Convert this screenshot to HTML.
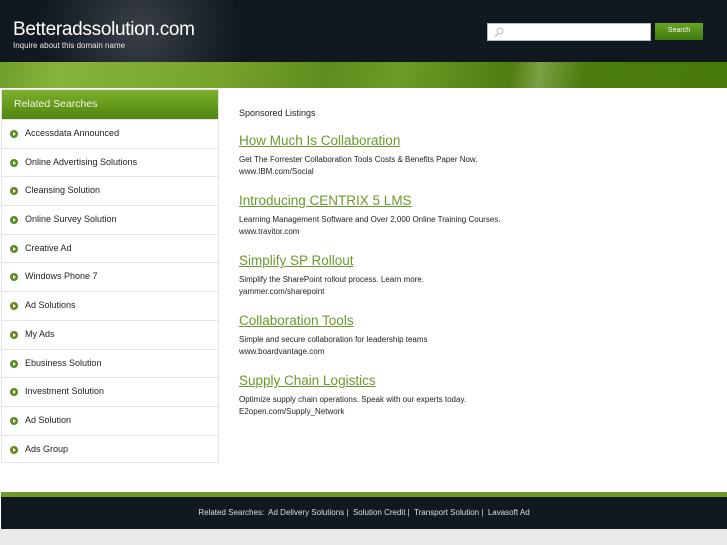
<!DOCTYPE html>
<html><head><style>
*{margin:0;padding:0;box-sizing:border-box}
body{width:727px;height:545px;background:#fff;font-family:"Liberation Sans",sans-serif;position:relative;overflow:hidden}
.hd{position:absolute;left:0;top:0;width:727px;height:62px;background:radial-gradient(circle at 140px 30px,#3a4046 0,#252b32 50px,#121820 100px)}
.hd h1{position:absolute;left:13px;top:19px;font-size:19px;font-weight:normal;color:#fff;letter-spacing:-0.3px}
.hd .sub{position:absolute;left:13px;top:41px;font-size:8px;color:#e8e8e8}
.sb{position:absolute;left:487px;top:23px;width:164px;height:18px;background:#fff;border:1px solid #bbb}
.btn{position:absolute;left:655px;top:23px;width:48px;height:17px;background:linear-gradient(#6aa324,#3f7a10);color:#fff;font-size:7px;text-align:center;line-height:16px}
.band{position:absolute;left:0;top:62px;width:727px;height:26px;background:linear-gradient(100deg,#6f9d2a 0,#86b43a 8%,#77a42c 30%,#5f8d1e 45%,#6b9b28 55%,#4f7d10 70%,#7aa043 74%,#4c7c0e 80%,#497a0c 100%)}
.side{position:absolute;left:1px;top:89px;width:218px;height:374px;border:1px solid #e4e4e4}
.sh{height:29px;background:linear-gradient(#7fb02c,#4f850f);color:#f0f5e8;font-size:10.5px;padding:8px 0 0 12px}
.it{height:28.7px;border-top:1px solid #e4e4e4;font-size:9px;color:#222;padding:8px 0 0 23px;position:relative}
.it:before{content:"";position:absolute;left:8px;top:10px;width:8px;height:8px;border-radius:50%;background:#5c8a1e}
.it:after{content:"";position:absolute;left:11px;top:12px;border-left:3px solid #fff;border-top:2px solid transparent;border-bottom:2px solid transparent}
.main{position:absolute;left:239px;top:107px}
.sp{font-size:9px;color:#222;margin-top:1px}
.ad{position:absolute;left:0;width:400px}
.ad a{font-size:13.5px;color:#6a9a2a;text-decoration:underline;display:block}
.ad p{font-size:8px;color:#222;line-height:12px;margin-top:6px}
.fl{position:absolute;left:1px;top:492px;width:726px;height:5px;background:#6e9a2c}
.fd{position:absolute;left:1px;top:497px;width:726px;height:32px;background:#121820;color:#ddd;font-size:8px;text-align:center;line-height:31px}
.fg{position:absolute;left:0;top:529px;width:727px;height:16px;background:#e9e9e9}
</style></head><body>
<div class="hd"><h1>Betteradssolution.com</h1><div class="sub">Inquire about this domain name</div>
<div class="sb"><svg width="12" height="14" style="position:absolute;left:5px;top:2px"><circle cx="7" cy="5" r="3" fill="none" stroke="#bbb" stroke-width="1"/><line x1="5" y1="7.5" x2="2" y2="11" stroke="#bbb"/></svg></div>
<div class="btn">Search</div></div>
<div class="band"></div>
<div class="side"><div class="sh">Related Searches</div>
<div class="it">Accessdata Announced</div><div class="it">Online Advertising Solutions</div><div class="it">Cleansing Solution</div><div class="it">Online Survey Solution</div><div class="it">Creative Ad</div><div class="it">Windows Phone 7</div><div class="it">Ad Solutions</div><div class="it">My Ads</div><div class="it">Ebusiness Solution</div><div class="it">Investment Solution</div><div class="it">Ad Solution</div><div class="it">Ads Group</div></div>
<div class="main"><div class="sp">Sponsored Listings</div>
<div class="ad" style="top:26px"><a>How Much Is Collaboration</a><p>Get The Forrester Collaboration Tools Costs &amp; Benefits Paper Now.<br>www.IBM.com/Social</p></div>
<div class="ad" style="top:86px"><a>Introducing CENTRIX 5 LMS</a><p>Learning Management Software and Over 2,000 Online Training Courses.<br>www.travitor.com</p></div>
<div class="ad" style="top:146px"><a>Simplify SP Rollout</a><p>Simplify the SharePoint rollout process. Learn more.<br>yammer.com/sharepoint</p></div>
<div class="ad" style="top:206px"><a>Collaboration Tools</a><p>Simple and secure collaboration for leadership teams<br>www.boardvantage.com</p></div>
<div class="ad" style="top:266px"><a>Supply Chain Logistics</a><p>Optimize supply chain operations. Speak with our experts today.<br>E2open.com/Supply_Network</p></div>
</div>
<div class="fl"></div>
<div class="fd">Related Searches:&nbsp; Ad Delivery Solutions |&nbsp; Solution Credit |&nbsp; Transport Solution |&nbsp; Lavasoft Ad</div>
<div class="fg"></div>
</body></html>
